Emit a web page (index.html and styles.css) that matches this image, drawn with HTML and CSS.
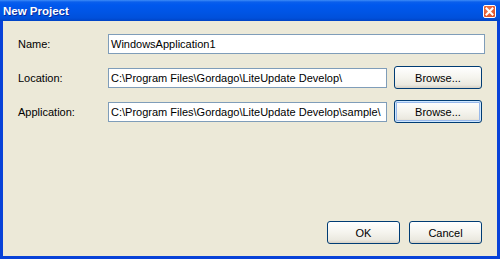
FILE: index.html
```html
<!DOCTYPE html>
<html lang="en">
<head>
    <meta charset="UTF-8">
    <title>New Project</title>
    <link rel="stylesheet" href="styles.css">
</head>
<body>
    <div class="window">
        <div class="titlebar">
            <span class="title">New Project</span>
            <div class="close">
                <svg width="9" height="9" viewBox="0 0 9 9">
                    <path d="M1.5 1.5 L7.5 7.5 M7.5 1.5 L1.5 7.5" stroke="#ffffff" stroke-width="2" stroke-linecap="square"/>
                </svg>
            </div>
        </div>
        <div class="client">
            <div class="fields">
                <div class="row">
                    <label class="label">Name:</label>
                    <div class="textbox wide">WindowsApplication1</div>
                </div>
                <div class="row">
                    <label class="label">Location:</label>
                    <div class="textbox">C:\Program Files\Gordago\LiteUpdate Develop\</div>
                    <button class="btn browse">Browse...</button>
                </div>
                <div class="row">
                    <label class="label">Application:</label>
                    <div class="textbox">C:\Program Files\Gordago\LiteUpdate Develop\sample\</div>
                    <button class="btn browse hot">Browse...</button>
                </div>
            </div>
            <div class="actions">
                <button class="btn small">OK</button>
                <button class="btn small">Cancel</button>
            </div>
        </div>
    </div>
</body>
</html>
```

FILE: styles.css
```css
body{
    margin: 0;
    font-family: 'Liberation Sans', Arial, sans-serif;
    font-size: 11px;
    color: #000000;
    background: #ece9d8;
}

.window{
    width: 500px;
    height: 259px;
    display: flex;
    flex-direction: column;
}

.titlebar{
    height: 21px;
    flex: none;
    display: flex;
    align-items: center;
    justify-content: space-between;
    padding: 0 4px 0 3px;
    background: linear-gradient(to bottom, #3d8cf7 0px, #0a5fec 2px, #0058ee 5px, #0055e5 12px, #0050db 18px, #0043c4 21px);
}

.title{
    color: #ffffff;
    font-weight: bold;
    font-size: 11.5px;
    text-shadow: 1px 1px 0 #0a2a9c;
    margin-top: 1px;
}

.close{
    width: 13px;
    height: 13px;
    box-sizing: border-box;
    border: 1px solid #ffffff;
    border-radius: 2px;
    background: radial-gradient(circle at 40% 35%, #ee7b52, #d9471d);
    display: flex;
    align-items: center;
    justify-content: center;
    margin-top: 1px;
}

.close svg{
    display: block;
}

.client{
    flex: 1;
    display: flex;
    flex-direction: column;
    justify-content: space-between;
    border: 3px solid #0842d8;
    border-top: none;
    padding: 11px 12px 12px 15px;
    background: #ece9d8;
}

.fields{
    display: flex;
    flex-direction: column;
    gap: 11px;
}

.row{
    height: 23px;
    display: flex;
    align-items: center;
}

.label{
    width: 90px;
}

.textbox{
    width: 279px;
    height: 20px;
    box-sizing: border-box;
    border: 1px solid #7f9db9;
    background: #ffffff;
    padding: 0 2px;
    line-height: 18px;
    white-space: nowrap;
    overflow: hidden;
}

.textbox.wide{
    width: 377px;
}

.btn{
    height: 23px;
    box-sizing: border-box;
    border: 1px solid #003c74;
    border-radius: 3px;
    background: linear-gradient(to bottom, #ffffff 0%, #f5f4ee 50%, #ebe9e0 85%, #d6d0c5 100%);
    font-family: 'Liberation Sans', Arial, sans-serif;
    font-size: 11px;
    color: #000000;
    padding: 0;
}

.browse{
    width: 88px;
    margin-left: 7px;
}

.hot{
    box-shadow: inset 0 0 0 1px #cee7ff, inset 0 0 0 2px #98b8ea;
}

.actions{
    display: flex;
    justify-content: flex-end;
    gap: 9px;
    padding-right: 3px;
}

.small{
    width: 73px;
}
```
